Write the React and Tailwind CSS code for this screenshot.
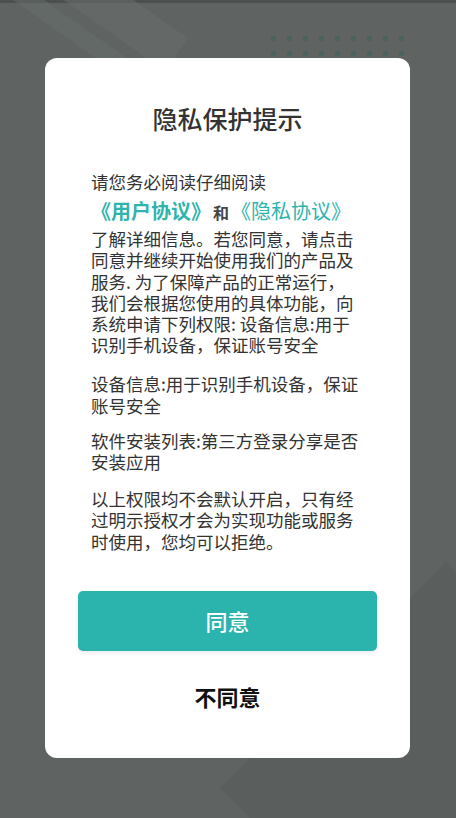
import React from "react"

const dots = Array.from({ length: 18 })

export default function App() {
  return (
    <div
      className="relative w-[456px] h-[818px] overflow-hidden bg-[#5f6463]"
      style={{ fontFamily: '"Noto Sans CJK SC", "Noto Sans", sans-serif' }}
    >
      {/* background decoration */}
      <div className="absolute inset-x-0 top-0 h-[3px] bg-[#4c504f]" />
      <div className="absolute -left-[60px] -top-[40px] w-[260px] h-[40px] rotate-[35deg] bg-[#676c6b] opacity-60" />
      <div className="absolute -left-[40px] top-[20px] w-[220px] h-[18px] rotate-[35deg] bg-[#686d6c] opacity-50" />
      <div className="absolute right-[-150px] bottom-[-130px] w-[320px] h-[320px] rotate-[45deg] bg-[#5a5f5e]" />
      <div className="absolute left-[271px] top-[36px] grid grid-cols-9 gap-x-[11px] gap-y-[10px]">
        {dots.map((_, i) => (
          <span key={i} className="block w-[5px] h-[5px] rounded-full bg-[#48625f]" />
        ))}
      </div>

      <div className="relative ml-[45px] mt-[58px] w-[365px] h-[700px] rounded-[12px] bg-white pt-[44px] px-[46px] flex flex-col">
        <h1 className="text-center text-[25px] leading-[32px] font-medium text-[#333333]">隐私保护提示</h1>

        <div className="mt-[37px] text-[17.5px] leading-[21.2px] text-[#333333]">
          <p>请您务必阅读仔细阅读</p>
          <p className="mt-[5px] h-[28px] leading-[28px] text-[#2fb4ad] whitespace-nowrap">
            <span className="text-[20px] font-bold">《用户协议》</span>
            <span className="text-[16px] font-bold text-[#444444] mx-[2px]">和</span>
            <span className="text-[20px]">《隐私协议》</span>
          </p>
          <p className="mt-[3px]">
            了解详细信息。若您同意，请点击<br />
            同意并继续开始使用我们的产品及<br />
            服务. 为了保障产品的正常运行，<br />
            我们会根据您使用的具体功能，向<br />
            系统申请下列权限: 设备信息:用于<br />
            识别手机设备，保证账号安全
          </p>
          <p className="mt-[18px]">
            设备信息:用于识别手机设备，保证<br />
            账号安全
          </p>
          <p className="mt-[14px]">
            软件安装列表:第三方登录分享是否<br />
            安装应用
          </p>
          <p className="mt-[16px]">
            以上权限均不会默认开启，只有经<br />
            过明示授权才会为实现功能或服务<br />
            时使用，您均可以拒绝。
          </p>
        </div>

        <button className="mt-[39px] -mx-[13px] h-[60px] rounded-[5px] bg-[#2bb3ae] text-white text-[22px] font-medium shadow-[0_2px_4px_rgba(0,0,0,0.08)]">
          同意
        </button>
        <button className="mt-[30px] h-[30px] leading-[30px] text-[22px] font-bold text-[#111111]">
          不同意
        </button>
      </div>
    </div>
  )
}
